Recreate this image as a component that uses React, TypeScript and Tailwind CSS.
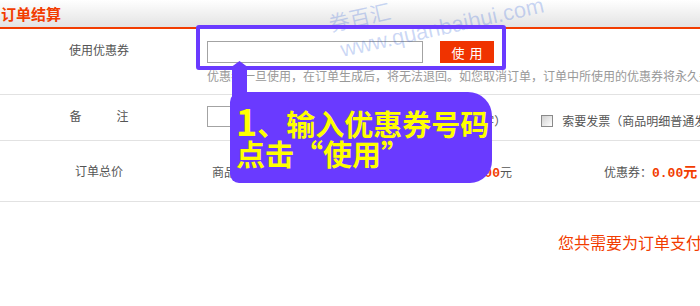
export default function App() {
  return (
    <div className="relative w-[700px] h-[306px] overflow-hidden bg-white font-['Noto_Sans_CJK_SC','Noto_Sans',sans-serif]">
      <div className="h-[27px] bg-gradient-to-b from-white to-[#e3e3e3] flex items-center pl-[1px] text-[15px] leading-[15px] font-bold text-[#f23c00]">
        订单结算
      </div>
      <div className="h-[2px] bg-[#f23c00]" />

      {/* row 1 */}
      <div className="h-[66px] border-b border-[#e2e2e2] flex">
        <div className="w-[198px] shrink-0 pt-[15px] text-center text-[12px] leading-[12px] text-[#555]">使用优惠券</div>
        <div className="pl-[9px] pt-[12px] shrink-0">
          <div className="flex">
            <div className="w-[216px] h-[22px] border border-[#a3a3a3] bg-white" />
            <div className="ml-[17px] w-[54px] h-[22px] bg-[#f03300] text-white text-[13px] leading-[13px] flex items-center justify-center gap-[5px]">
              <span>使</span>
              <span>用</span>
            </div>
          </div>
          <div className="mt-[7px] text-[12px] leading-[12px] text-[#999] whitespace-nowrap">
            优惠券一旦使用，在订单生成后，将无法退回。如您取消订单，订单中所使用的优惠券将永久失效。
          </div>
        </div>
      </div>

      {/* row 2 */}
      <div className="h-[46px] border-b border-[#e2e2e2] flex">
        <div className="w-[198px] shrink-0 pt-[15px] flex justify-center text-[12px] leading-[12px] text-[#555]">
          <div className="w-[59px] flex justify-between">
            <span>备</span>
            <span>注</span>
          </div>
        </div>
        <div className="pl-[9px] shrink-0 flex items-start whitespace-nowrap text-[12px] leading-[12px] text-[#555]">
          <div className="mt-[11px] shrink-0 w-[216px] h-[21px] border border-[#a3a3a3] bg-white" />
          <div className="mt-[20px] ml-[22px]">（限60字）</div>
          <div className="mt-[20px] ml-[35px] shrink-0 w-[12px] h-[12px] border border-[#8a8a8a] bg-gradient-to-br from-[#d0d0d0] to-white" />
          <div className="mt-[20px] ml-[9px]">索要发票（商品明细普通发票）</div>
        </div>
      </div>

      {/* row 3 */}
      <div className="h-[61px] border-b border-[#e2e2e2] flex">
        <div className="w-[198px] shrink-0 pt-[24px] text-center text-[12px] leading-[12px] text-[#555]">订单总价</div>
        <div className="pl-[14px] pt-[23px] shrink-0 flex items-baseline whitespace-nowrap text-[12px] leading-[14px] text-[#555]">
          <div className="w-[300px] shrink-0 flex items-baseline justify-between">
            <div className="flex items-baseline">
              <span>商品金额：</span>
              <span className="font-['Liberation_Mono',monospace] font-bold text-[13px] text-[#f23c00]">0.00</span>
              <span>元</span>
            </div>
            <div className="flex items-baseline">
              <span>运费：</span>
              <span className="font-['Liberation_Mono',monospace] font-bold text-[13px] text-[#f23c00]">0.00</span>
              <span>元</span>
            </div>
          </div>
          <div className="ml-[92px] flex items-baseline">
            <span>优惠券：</span>
            <span className="font-['Liberation_Mono',monospace] font-bold text-[13px] text-[#f23c00]">0.00</span>
            <span className="text-[14px] font-bold text-[#f23c00]">元</span>
          </div>
        </div>
      </div>

      {/* row 4 */}
      <div className="pl-[558px] pt-[32px] whitespace-nowrap text-[16px] leading-[16px] text-[#f23c00]">
        您共需要为订单支付：0.00元
      </div>

      {/* watermark */}
      <div className="absolute left-[331px] top-[13px] origin-bottom-left -rotate-[12.5deg] text-[21px] leading-[21px] text-[#2f5fd8]/25 whitespace-nowrap">
        券百汇
      </div>
      <div className="absolute left-[343px] top-[39px] origin-bottom-left -rotate-[12.5deg] font-['Liberation_Sans',sans-serif] text-[22px] leading-[22px] text-[#2f5fd8]/25 whitespace-nowrap">
        www.quanbaihui.com
      </div>

      {/* highlight box */}
      <div className="absolute left-[196px] top-[25px] w-[310px] h-[45px] border-[4px] border-[#6a3aff] rounded-[3px]" />

      {/* arrow */}
      <svg className="absolute left-[228px] top-[59px]" width="24" height="40" viewBox="0 0 24 40">
        <polygon points="11.5,2 2,9 4,9 4,38 19,38 19,9 21,9" fill="#6a3aff" />
      </svg>

      {/* bubble */}
      <div className="absolute left-[230px] top-[92px] w-[262px] h-[91px] bg-[#6a3aff] rounded-tl-[10px] rounded-tr-[24px] rounded-br-[22px] rounded-bl-[9px] pl-[6px] pt-[16px] text-[29px] leading-[30px] font-bold text-[#ffff00] whitespace-nowrap">
        <div>
          <span className="text-[36px] leading-[0px]">1</span>、输入优惠券号码
        </div>
        <div>点击“使用”</div>
      </div>
    </div>
  );
}
